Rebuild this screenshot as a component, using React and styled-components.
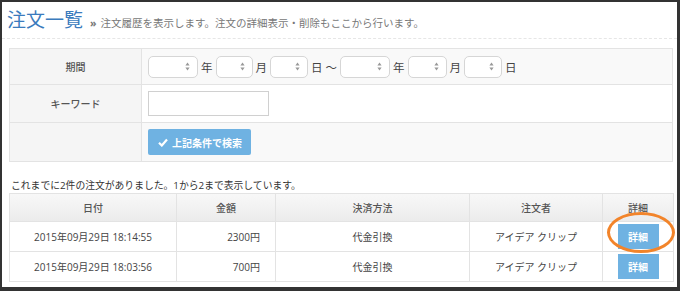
import React from 'react';
import styled, { createGlobalStyle } from 'styled-components';

const FONT = `"Open Sans", "Noto Sans CJK JP", sans-serif`;

const GlobalStyle = createGlobalStyle`
  html, body {
    margin: 0;
    padding: 0;
    background: #fff;
  }
  body {
    font-family: ${FONT};
    color: #444;
  }
`;

const Frame = styled.div`
  position: relative;
  box-sizing: border-box;
  width: 680px;
  height: 291px;
  overflow: hidden;
  border-style: solid;
  border-color: #333;
  border-width: 2px 3px 4px 2px;
  background: #fff;
`;

const Header = styled.div`
  display: flex;
  align-items: baseline;
  gap: 7px;
  height: 37px;
  box-sizing: border-box;
  padding: 5px 0 0 5px;
  border-bottom: 1px dashed #e6e6e6;
`;

const Title = styled.h1`
  margin: 0;
  font-size: 19px;
  font-weight: 400;
  color: #3b7bbd;
  line-height: 26px;
`;

const Sub = styled.span`
  font-size: 10.5px;
  color: #777;
  span {
    font-weight: bold;
    margin-right: 4px;
  }
`;

const Content = styled.div`
  padding: 9px 4px 0 7px;
`;

const FormTable = styled.table`
  width: 664px;
  table-layout: fixed;
  border-collapse: collapse;
  font-size: 10px;
  td, th {
    border: 1px solid #e3e3e3;
    padding: 0 6px;
  }
`;

const FormRow = styled.tr`
  height: ${p => p.$h}px;
  background: ${p => (p.$striped ? '#f9f9f9' : '#fff')};
`;

const LabelCell = styled.th`
  width: 132px;
  box-sizing: border-box;
  background: #f5f5f5;
  color: #555;
  font-weight: 500;
  text-align: center;
`;

const DateLine = styled.div`
  display: flex;
  align-items: center;
  gap: 3px;
  font-size: 11.5px;
  color: #444;
`;

const SelectBox = styled.div`
  box-sizing: border-box;
  width: ${p => p.$w}px;
  height: 22px;
  border: 1px solid #d6d6d6;
  border-radius: 5px;
  background: #fff;
  display: flex;
  align-items: center;
  justify-content: flex-end;
  padding-right: 7px;
`;

const TextInput = styled.div`
  box-sizing: border-box;
  width: 121px;
  height: 25px;
  border: 1px solid #d0d0d0;
  background: #fff;
`;

const SearchButton = styled.button`
  display: inline-flex;
  align-items: center;
  gap: 4px;
  width: 103px;
  height: 26px;
  padding: 0 0 0 10px;
  border: none;
  border-radius: 2px;
  background: #6fb2e2;
  color: #fff;
  font-family: ${FONT};
  font-size: 10px;
  font-weight: bold;
  vertical-align: middle;
`;

const Note = styled.p`
  margin: 17px 0 1px 2px;
  font-size: 9.8px;
  line-height: 13px;
  color: #333;
`;

const ListTable = styled.table`
  width: 664px;
  table-layout: fixed;
  border-collapse: collapse;
  font-size: 10px;
  th, td {
    border: 1px solid #e3e3e3;
    padding: 0 8px;
    text-align: center;
  }
`;

const HeadRow = styled.tr`
  height: 28px;
  background: linear-gradient(#f8f8f8, #ebebeb);
`;

const HeadCell = styled.th`
  width: ${p => p.$w}px;
  box-sizing: border-box;
  color: #555;
  font-weight: 500;
`;

const BodyRow = styled.tr`
  height: 30px;
  color: #444;
`;

const Cell = styled.td`
  text-align: ${p => p.$align || 'center'} !important;
  padding-right: ${p => (p.$align === 'right' ? '15px' : '8px')} !important;
`;

const DetailButton = styled.button`
  width: 41px;
  height: 25px;
  border: none;
  background: #6fb2e2;
  color: #fff;
  font-family: ${FONT};
  font-size: 10px;
  font-weight: bold;
  padding: 0;
  vertical-align: middle;
`;

/* annotation ring drawn over the first detail button */
const Circle = styled.div`
  position: absolute;
  left: 605px;
  top: 210px;
  box-sizing: border-box;
  width: 68px;
  height: 41px;
  border: 3px solid #f2842a;
  border-radius: 50%;
  pointer-events: none;
`;

const Arrows = () => (
  <svg width="5" height="9" viewBox="0 0 5 9">
    <path d="M2.5 0.5 L4.6 3.5 L0.4 3.5 Z" fill="#999" />
    <path d="M2.5 8.5 L4.6 5.5 L0.4 5.5 Z" fill="#999" />
  </svg>
);

const Check = () => (
  <svg width="10" height="9" viewBox="0 0 10 9">
    <path d="M1 4.8 L3.8 7.5 L9 1.5" fill="none" stroke="#fff" strokeWidth="2.2" />
  </svg>
);

const Select = ({ w }) => (
  <SelectBox $w={w}>
    <Arrows />
  </SelectBox>
);

const orders = [
  { date: '2015年09月29日 18:14:55', amount: '2300円', pay: '代金引換', who: 'アイデア クリップ' },
  { date: '2015年09月29日 18:03:56', amount: '700円', pay: '代金引換', who: 'アイデア クリップ' },
];

export default function App() {
  return (
    <>
      <GlobalStyle />
      <Frame>
        <Header>
          <Title>注文一覧</Title>
          <Sub>
            <span>»</span>注文履歴を表示します。注文の詳細表示・削除もここから行います。
          </Sub>
        </Header>
        <Content>
          <FormTable>
            <tbody>
              <FormRow $h={36} $striped>
                <LabelCell>期間</LabelCell>
                <td>
                  <DateLine>
                    <Select w={50} />年
                    <Select w={37} />月
                    <Select w={38} />日 〜
                    <Select w={50} />年
                    <Select w={39} />月
                    <Select w={38} />日
                  </DateLine>
                </td>
              </FormRow>
              <FormRow $h={38}>
                <LabelCell>キーワード</LabelCell>
                <td>
                  <TextInput />
                </td>
              </FormRow>
              <FormRow $h={39} $striped>
                <LabelCell />
                <td>
                  <SearchButton>
                    <Check />
                    上記条件で検索
                  </SearchButton>
                </td>
              </FormRow>
            </tbody>
          </FormTable>

          <Note>これまでに2件の注文がありました。1から2まで表示しています。</Note>

          <ListTable>
            <thead>
              <HeadRow>
                <HeadCell $w={167}>日付</HeadCell>
                <HeadCell $w={99}>金額</HeadCell>
                <HeadCell $w={194}>決済方法</HeadCell>
                <HeadCell $w={133}>注文者</HeadCell>
                <HeadCell $w={71}>詳細</HeadCell>
              </HeadRow>
            </thead>
            <tbody>
              {orders.map((o, i) => (
                <BodyRow key={i}>
                  <Cell>{o.date}</Cell>
                  <Cell $align="right">{o.amount}</Cell>
                  <Cell>{o.pay}</Cell>
                  <Cell>{o.who}</Cell>
                  <Cell>
                    <DetailButton>詳細</DetailButton>
                  </Cell>
                </BodyRow>
              ))}
            </tbody>
          </ListTable>
        </Content>
        <Circle />
      </Frame>
    </>
  );
}
